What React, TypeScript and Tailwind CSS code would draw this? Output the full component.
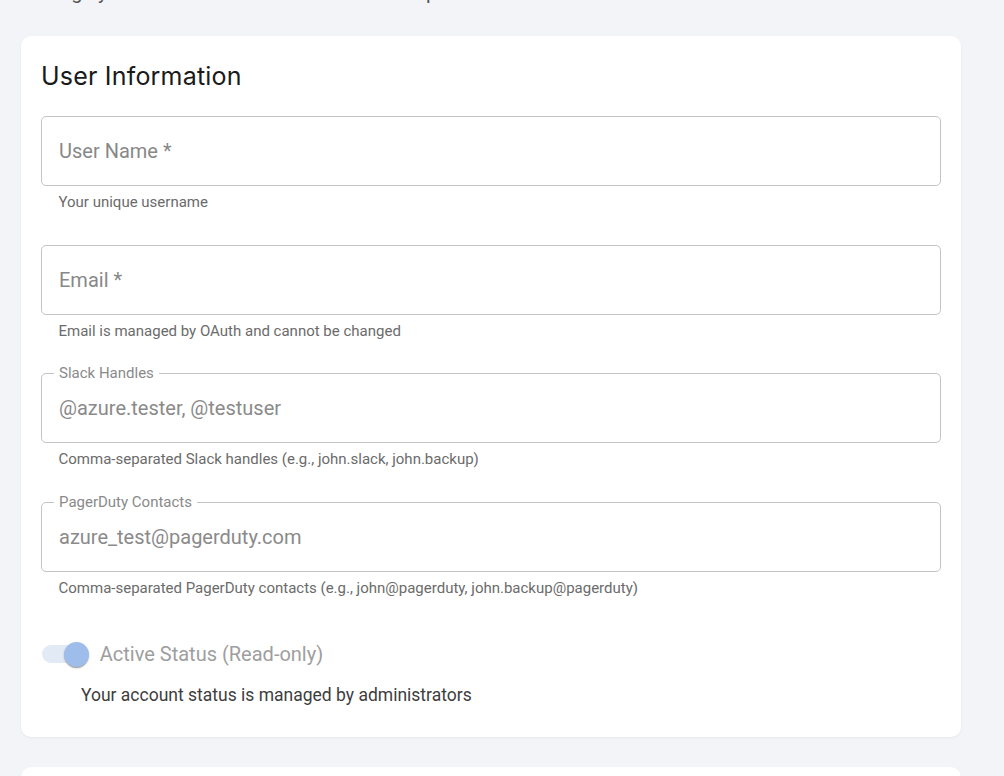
import React from 'react';

const roboto = { fontFamily: 'Roboto, "Liberation Sans", sans-serif' };

type FieldProps = {
  label: string;
  value?: string;
  helper: string;
};

function OutlinedField({ label, value, helper }: FieldProps) {
  return (
    <div className="mb-[29.6px]">
      <div className="relative h-[70px] rounded-[5px] border border-[#c4c4c4] bg-white">
        {value ? (
          <>
            <span className="absolute -top-[11px] left-[12px] bg-white px-[5px] text-[15px] leading-[20px] text-[#8a8a8a]">
              {label}
            </span>
            <div className="flex h-full items-center pl-[17px] text-[20px] text-[#8a8a8a]">
              {value}
            </div>
          </>
        ) : (
          <div className="flex h-full items-center pl-[17px] text-[20px] text-[#888888]">
            {label}
          </div>
        )}
      </div>
      <p className="mt-[4px] ml-[17.5px] text-[15px] leading-[25px] text-[#6b6b6b]">{helper}</p>
    </div>
  );
}

function ReadOnlySwitch() {
  return (
    <div className="relative h-[47.5px] w-[72.5px] shrink-0">
      <div className="absolute left-[15px] top-[15px] h-[17.5px] w-[42.5px] rounded-full bg-[#e2eaf6]" />
      <div className="absolute left-[36.25px] top-[11.25px] h-[25px] w-[25px] rounded-full bg-[#9fbdea] shadow-[0_2px_1px_-1px_rgba(0,0,0,0.2),0_1px_1px_0_rgba(0,0,0,0.14),0_1px_3px_0_rgba(0,0,0,0.12)]" />
    </div>
  );
}

export default function App() {
  return (
    <div className="min-h-[776px] overflow-hidden bg-[#f3f4f8]" style={roboto}>
      <div className="w-[940px] ml-[21px]">
        <p className="-mt-[20px] h-[24px] text-[20px] leading-[24px] text-[#555]">
          Manage your account details and notification preferences
        </p>

        <div className="mt-[32px] rounded-[10px] bg-white px-[20px] pt-[20px] pb-[29px] shadow-[0_1px_3px_rgba(0,0,0,0.05)]">
          <h2
            className="mb-[20px] text-[25px] leading-[40px] font-normal text-[#1a1a1a] tracking-[0.2px]"
            style={{ fontFamily: 'Inter, "Liberation Sans", sans-serif' }}
          >
            User Information
          </h2>

          <OutlinedField label="User Name *" helper="Your unique username" />
          <OutlinedField label="Email *" helper="Email is managed by OAuth and cannot be changed" />
          <OutlinedField
            label="Slack Handles"
            value="@azure.tester, @testuser"
            helper="Comma-separated Slack handles (e.g., john.slack, john.backup)"
          />
          <OutlinedField
            label="PagerDuty Contacts"
            value="azure_test@pagerduty.com"
            helper="Comma-separated PagerDuty contacts (e.g., john@pagerduty, john.backup@pagerduty)"
          />

          <div className="mt-[1px] flex items-center -ml-[13.75px]">
            <ReadOnlySwitch />
            <span className="text-[20px] leading-[30px] text-[#9e9e9e]">Active Status (Read-only)</span>
          </div>
          <p className="mt-[5px] ml-[40px] text-[17.5px] leading-[25px] text-[#3d3d3d]">
            Your account status is managed by administrators
          </p>
        </div>

        <div className="mt-[30px] h-[200px] rounded-[10px] bg-white shadow-[0_1px_3px_rgba(0,0,0,0.05)]" />
      </div>
    </div>
  );
}
